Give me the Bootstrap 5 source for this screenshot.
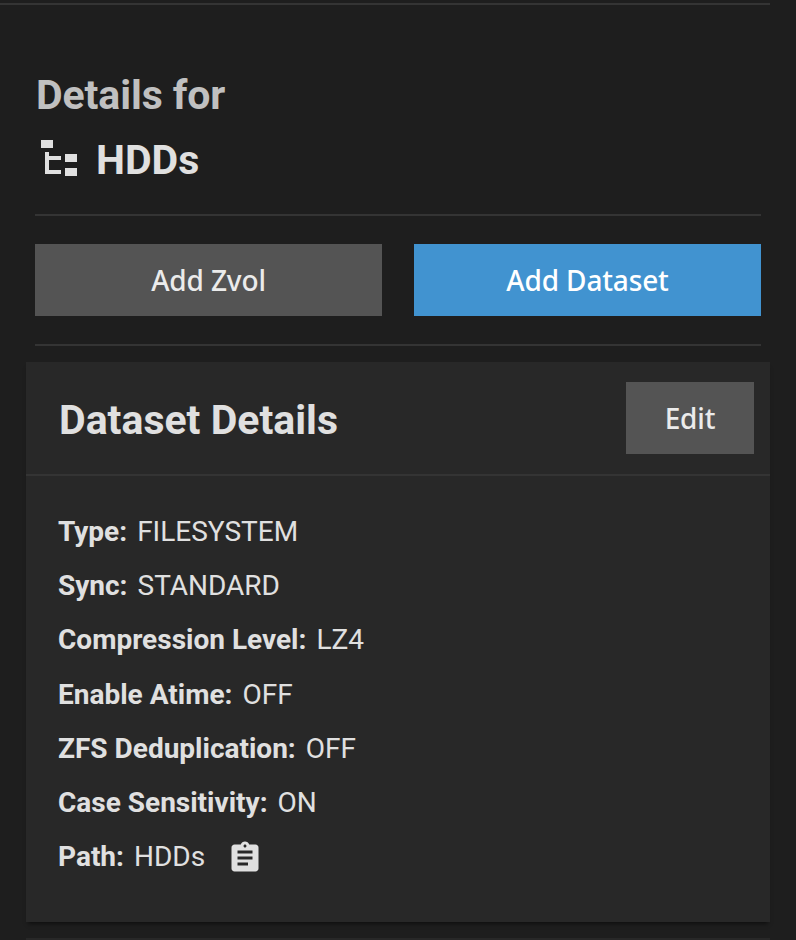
<!DOCTYPE html>
<html lang="en" data-bs-theme="dark">
<head>
<meta charset="utf-8">
<meta name="viewport" content="width=device-width, initial-scale=1">
<title>Details for HDDs</title>
<link href="https://cdn.jsdelivr.net/npm/bootstrap@5.3.0/dist/css/bootstrap.min.css" rel="stylesheet">
<style>
  body { background: #1e1e1e; color: #e0e0e0; font-family: Roboto, sans-serif; font-size: 28px; height: 940px; overflow: hidden; }
  .pane { width: 770px; padding-top: 3px; }
  .rule { height: 2px; background: #343434; }
  .inset { margin-left: 35px; margin-right: 9px; }
  .title { font-family: Roboto, "Noto Sans", sans-serif; font-size: 41px; font-weight: 700; line-height: 66px; white-space: nowrap; margin: 0; color: #e0e0e0; }
  .lead-in { color: #c0c0c0; line-height: 65px; padding: 1px 0 0 1px; margin-bottom: -1px; letter-spacing: -.1px; }
  .intro { padding-top: 57px; height: 209px; }
  .tree { width: 48px; height: 48px; margin: 0 13px 2px 0; }
  .action { --bs-btn-border-radius: 0; --bs-btn-border-width: 0; --bs-btn-padding-y: 0; --bs-btn-font-size: 28px; --bs-btn-line-height: 74px; --bs-btn-font-weight: 500; height: 72px; font-family: "Noto Sans", sans-serif; letter-spacing: -.15px; white-space: nowrap; }
  .action { padding-top: 1px; line-height: 71px; }
  .action-grey { --bs-btn-bg: #545454; --bs-btn-color: #ebebeb; }
  .action-blue { --bs-btn-bg: #4193d0; --bs-btn-color: #fff; }
  .actions { gap: 32px; padding: 28px 0; }
  .panel { margin: 16px 0 0 26px; height: 560px; --bs-card-bg: #282828; --bs-card-border-width: 0; --bs-card-border-radius: 0; box-shadow: 0 4px 4px -2px rgba(0,0,0,.5); color: #e0e0e0; }
  .panel-next { height: 2px; }
  .panel-head { height: 112px; padding: 0 16px 0 33px; }
  .panel-head .title { padding-top: 3px; }
  .edit { width: 128px; }
  .facts { padding: 29px 32px; }
  .fact { height: 54.17px; gap: 10px; white-space: nowrap; }
  .clip { width: 36px; height: 36px; margin: 2px 0 0 12px; }
</style>
</head>
<body>
<main class="pane">
  <div class="rule"></div>
  <header class="intro inset">
    <h2 class="title lead-in">Details for</h2>
    <div class="d-flex align-items-center">
      <svg class="tree" viewBox="0 0 48 48" fill="#e0e0e0" shape-rendering="crispEdges" aria-hidden="true"><path d="M6 5h12v8H6zM30 19h12v8H30zM30 33h12v8H30zM10 17h4v4h12v4H14v10h12v4H10z"/></svg>
      <h1 class="title">HDDs</h1>
    </div>
  </header>
  <div class="rule inset"></div>
  <div class="actions inset d-flex">
    <button type="button" class="btn action action-grey flex-fill w-50">Add Zvol</button>
    <button type="button" class="btn action action-blue flex-fill w-50">Add Dataset</button>
  </div>
  <div class="rule inset"></div>
  <section class="card panel">
    <div class="panel-head d-flex align-items-center justify-content-between">
      <h3 class="title">Dataset Details</h3>
      <button type="button" class="btn action action-grey edit">Edit</button>
    </div>
    <div class="rule"></div>
    <div class="facts">
      <div class="fact d-flex align-items-center"><strong>Type:</strong><span>FILESYSTEM</span></div>
      <div class="fact d-flex align-items-center"><strong>Sync:</strong><span>STANDARD</span></div>
      <div class="fact d-flex align-items-center"><strong>Compression Level:</strong><span>LZ4</span></div>
      <div class="fact d-flex align-items-center"><strong>Enable Atime:</strong><span>OFF</span></div>
      <div class="fact d-flex align-items-center"><strong>ZFS Deduplication:</strong><span>OFF</span></div>
      <div class="fact d-flex align-items-center"><strong>Case Sensitivity:</strong><span>ON</span></div>
      <div class="fact d-flex align-items-center"><strong>Path:</strong><span>HDDs</span>
        <svg class="clip" viewBox="0 0 24 24" fill="#e0e0e0" aria-hidden="true"><path d="M19 3h-4.18C14.4 1.84 13.3 1 12 1c-1.3 0-2.4.84-2.82 2H5c-1.1 0-2 .9-2 2v14c0 1.1.9 2 2 2h14c1.1 0 2-.9 2-2V5c0-1.1-.9-2-2-2zm-7 0c.55 0 1 .45 1 1s-.45 1-1 1-1-.45-1-1 .45-1 1-1zm2 14H7v-2h7v2zm3-4H7v-2h10v2zm0-4H7V7h10v2z"/></svg>
      </div>
    </div>
  </section>
  <section class="card panel panel-next"></section>
</main>
<script src="https://cdn.jsdelivr.net/npm/bootstrap@5.3.0/dist/js/bootstrap.bundle.min.js"></script>
</body>
</html>
